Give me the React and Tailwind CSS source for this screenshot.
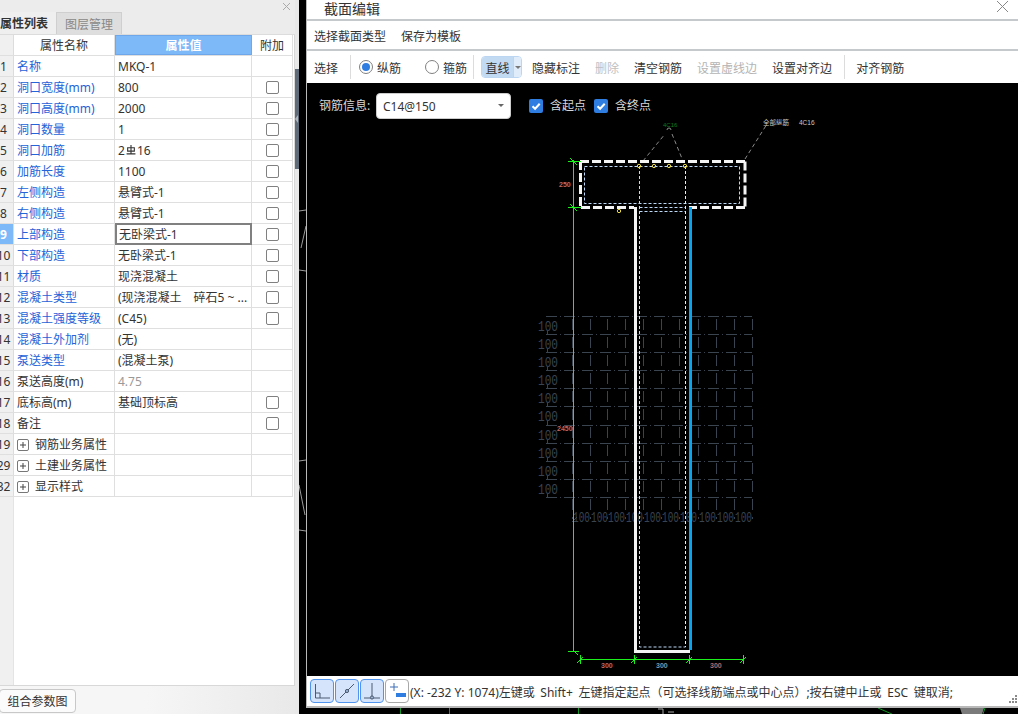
const rows = [
  { no: 1, name: '名称', value: 'MKQ-1', blue: true },
  { no: 2, name: '洞口宽度(mm)', value: '800', blue: true, check: true },
  { no: 3, name: '洞口高度(mm)', value: '2000', blue: true, check: true },
  { no: 4, name: '洞口数量', value: '1', blue: true, check: true },
  { no: 5, name: '洞口加筋', rebar: true, blue: true, check: true },
  { no: 6, name: '加筋长度', value: '1100', blue: true, check: true },
  { no: 7, name: '左侧构造', value: '悬臂式-1', blue: true, check: true },
  { no: 8, name: '右侧构造', value: '悬臂式-1', blue: true, check: true },
  { no: 9, name: '上部构造', value: '无卧梁式-1', blue: true, check: true, selected: true },
  { no: 10, name: '下部构造', value: '无卧梁式-1', blue: true, check: true },
  { no: 11, name: '材质', value: '现浇混凝土', blue: true, check: true },
  { no: 12, name: '混凝土类型', value: '(现浇混凝土　碎石5 ~ ...', blue: true, check: true },
  { no: 13, name: '混凝土强度等级', value: '(C45)', blue: true, check: true },
  { no: 14, name: '混凝土外加剂', value: '(无)', blue: true },
  { no: 15, name: '泵送类型', value: '(混凝土泵)', blue: true },
  { no: 16, name: '泵送高度(m)', value: '4.75', muted: true },
  { no: 17, name: '底标高(m)', value: '基础顶标高', check: true },
  { no: 18, name: '备注', value: '', check: true },
  { no: 19, name: '钢筋业务属性', group: true },
  { no: 29, name: '土建业务属性', group: true },
  { no: 32, name: '显示样式', group: true },
];

const gridY = [317, 335, 353, 371, 389, 407, 426, 444, 462, 480, 498];
const gridX = [572, 590, 607, 625, 643, 661, 679, 698, 716, 734, 752];

function RowNo({ no, active }) {
  return (
    <div className={`w-[14px] shrink-0 overflow-hidden border-r border-[#dcdcdc] pt-[2px] ${active ? 'bg-[#7db8f8] font-bold text-white' : 'bg-[#f0f0f0] text-[#333]'}`}>
      <div className="flex h-full w-[7px] items-center justify-center whitespace-nowrap">{no}</div>
    </div>
  );
}

function RebarValue() {
  return (
    <span className="flex items-center">
      2
      <svg viewBox="0 0 9 9" className="mx-[1px] mb-[3px] h-[10px] w-[10px]" fill="none" stroke="#333" strokeWidth="1" aria-label="钢筋符号">
        <path d="M1.5 2.5h6v3h-6zM4.5 0v8M.5 8h8" />
      </svg>
      16
    </span>
  );
}

function PropertyRow({ row }) {
  const valueBox = row.selected
    ? 'mb-[-1px] mt-[-1px] h-[22px] border-2 border-[#808080] pl-[2px]'
    : 'border-r border-[#dfdfdf] pl-[3px]';
  return (
    <div className="flex h-[21px] w-[293px] border-b border-[#dfdfdf] bg-white">
      <RowNo no={row.no} active={row.selected} />
      <div className={`flex w-[101px] shrink-0 items-center whitespace-nowrap border-r border-[#dfdfdf] pl-[3px] pt-[2px] ${row.blue ? 'text-[#2563d8]' : 'text-[#333]'}`}>
        {row.group && (
          <span className="mr-[6px] flex h-[12px] w-[12px] items-center justify-center rounded-[2px] border border-[#777]">
            <svg viewBox="0 0 8 8" className="h-[8px] w-[8px]" stroke="#444" strokeWidth="1"><path d="M4 1v6M1 4h6" /></svg>
          </span>
        )}
        {row.name}
      </div>
      <div className={`flex w-[137px] shrink-0 items-center whitespace-nowrap pt-[2px] ${row.muted ? 'text-[#999]' : 'text-[#333]'} ${valueBox}`}>
        {row.rebar ? <RebarValue /> : row.value}
      </div>
      <div className="flex w-[41px] shrink-0 items-center justify-center border-r border-[#dfdfdf]">
        {row.check && <span className="h-[13px] w-[13px] rounded-[2px] border border-[#808080] bg-white" />}
      </div>
    </div>
  );
}

function PropertyPanel() {
  return (
    <div className="flex h-full w-[295px] shrink-0 flex-col bg-gradient-to-r from-[#f6f6f6] via-[#f6f6f6] to-[#e9e9e9]">
      <div className="flex h-[12px] justify-end bg-[#ececec] pr-[5px] pt-[3px]">
        <svg viewBox="0 0 7 7" className="h-[7px] w-[7px]" stroke="#aaa" strokeWidth="1"><path d="M0 0l7 7M7 0l-7 7" /></svg>
      </div>
      <div className="flex h-[23px] border-b border-[#dcdcdc] bg-[#ececec]">
        <div className="flex w-[56px] items-center justify-start whitespace-nowrap bg-[#efefef] pt-[2px] font-bold text-[#333]">属性列表</div>
        <div className="flex w-[66px] items-center justify-center border border-b-0 border-[#cfcfcf] bg-[#dedede] pt-[2px] text-[#888]">图层管理</div>
      </div>
      <div className="flex h-[651px] flex-col border-b border-r border-[#d8d8d8] bg-white">
        <div className="flex h-[21px] w-[293px] border-b border-[#dfdfdf] bg-white">
          <div className="w-[14px] shrink-0 border-r border-[#dcdcdc] bg-[#f0f0f0]" />
          <div className="flex w-[101px] shrink-0 items-center justify-center border-r border-[#dfdfdf] pt-[2px] text-[#333]">属性名称</div>
          <div className="flex w-[137px] shrink-0 items-center justify-center border border-[#6fa8ea] bg-[#7db8f8] pt-[2px] font-bold text-white">属性值</div>
          <div className="flex w-[41px] shrink-0 items-center justify-center border-r border-[#dfdfdf] pt-[2px] text-[#333]">附加</div>
        </div>
        {rows.map((row) => (
          <PropertyRow key={row.no} row={row} />
        ))}
        <div className="w-[14px] flex-1 border-r border-[#e4e4e4] bg-[#f0f0f0]" />
      </div>
      <div className="flex flex-1 items-start pt-[3px]">
        <button type="button" className="ml-[-1px] flex h-[24px] w-[77px] items-center justify-center rounded-[4px] border border-[#c8c8c8] bg-[#fbfbfb] pt-[2px] text-[#333]">
          组合参数图
        </button>
      </div>
    </div>
  );
}

function Splitter() {
  return (
    <div className="flex h-full w-[4px] shrink-0 flex-col bg-[#e8e8e8]">
      <div className="h-[69px]" />
      <div className="flex h-[100px] items-center bg-[#5f6b78]">
        <svg viewBox="0 0 4 8" className="h-[8px] w-[4px]"><path d="M3 0v8L0 4z" fill="#aeb6bf" /></svg>
      </div>
    </div>
  );
}

// leftovers of the cad view behind the dialog
function BackdropStrip() {
  return (
    <svg viewBox="299 0 7 714" className="h-full w-[7px] shrink-0 bg-black" fill="none" stroke="#9a9a9a" strokeWidth="1">
      <path d="M299 211l7-1M301 248l5-22M299 270l7 1M299 461l7-1M299 485l6 30M299 530l7 1" />
    </svg>
  );
}

function Radio({ on }) {
  return (
    <span className="flex h-[14px] w-[14px] items-center justify-center rounded-full border border-[#808080] bg-white">
      {on && <span className="h-[8px] w-[8px] rounded-full bg-[#2f7de1]" />}
    </span>
  );
}

function Tick() {
  return (
    <span className="flex h-[14px] w-[14px] items-center justify-center rounded-[2px] bg-[#2f7de1]">
      <svg viewBox="0 0 12 12" className="h-[12px] w-[12px]" fill="none" stroke="#fff" strokeWidth="2"><path d="M2.5 6.2l2.6 2.6 4.6-5" /></svg>
    </span>
  );
}

function Toolbar() {
  return (
    <div className="flex h-[32px] items-center whitespace-nowrap bg-white text-[#333]">
      <span className="ml-[7px] pt-[4px]">选择</span>
      <span className="ml-[12px] h-[24px] w-px bg-[#dcdcdc]" />
      <span className="ml-[8px]"><Radio on /></span>
      <span className="ml-[4px] pt-[4px]">纵筋</span>
      <span className="ml-[24px]"><Radio /></span>
      <span className="ml-[4px] pt-[4px]">箍筋</span>
      <span className="ml-[6px] h-[24px] w-px bg-[#dcdcdc]" />
      <div className="ml-[7px] flex h-[22px] w-[41px] overflow-hidden rounded-[4px] border border-[#bcd6f2]">
        <span className="flex w-[31px] items-center justify-center bg-[#c3daf3] pt-[3px]">直线</span>
        <span className="flex flex-1 items-center justify-center border-l border-[#bcd6f2] bg-[#e0ecf9]">
          <span className="h-0 w-0 border-x-[3px] border-t-[3px] border-x-transparent border-t-[#777]" />
        </span>
      </div>
      <span className="ml-[10px] pt-[4px]">隐藏标注</span>
      <span className="ml-[15px] pt-[4px] text-[#c0c0c0]">删除</span>
      <span className="ml-[15px] pt-[4px]">清空钢筋</span>
      <span className="ml-[15px] pt-[4px] text-[#b4b4b4]">设置虚线边</span>
      <span className="ml-[15px] pt-[4px]">设置对齐边</span>
      <span className="ml-[12px] h-[24px] w-px bg-[#dcdcdc]" />
      <span className="ml-[11px] pt-[4px]">对齐钢筋</span>
    </div>
  );
}

function Drawing() {
  const labelFont = 'Liberation Mono, monospace';
  const smallFont = 'Liberation Sans, sans-serif';
  return (
    <svg viewBox="307 84 711 593" className="absolute inset-0 h-full w-full" fill="none">
      {/* hidden dimension grid */}
      <g stroke="#3a4350" strokeWidth="1">
        {gridY.map((y) => (
          <path key={y} d={`M546 ${y + 0.5}H752`} strokeDasharray="11 3 1 3" />
        ))}
        {gridX.map((x) => (
          <path key={x} d={`M${x + 0.5} 317V520`} strokeDasharray="11 7" strokeDashoffset="-3" />
        ))}
        {gridY.slice(0, 10).map((y) => (
          <path key={y} d={`M547.5 ${y + 15}v4`} />
        ))}
        <path d="M572 523l5-5" />
      </g>
      <g fill="#3a4350" fontFamily={labelFont} fontSize="15">
        {gridY.slice(0, 10).map((y) => (
          <text key={y} x="538" y={y + 15} textLength="20" lengthAdjust="spacingAndGlyphs">100</text>
        ))}
        {gridX.slice(0, 10).map((x) => (
          <text key={x} x={x + 1} y="523" textLength="17" lengthAdjust="spacingAndGlyphs">100</text>
        ))}
      </g>

      {/* leaders */}
      <g stroke="#8a8a8a" strokeWidth="1" strokeDasharray="4 3">
        <path d="M643 162l22-27M672 135l11 27M745 160l22-35" />
      </g>
      <path d="M667 131a2 2 0 0 1 4 0" stroke="#8a8a8a" />
      <text x="663" y="128" fontSize="6" fill="#0d7a1f" fontFamily={smallFont}>4C16</text>
      <text x="763" y="126" fontSize="6.5" fill="#c9c9c9" fontFamily="Noto Sans CJK SC, sans-serif">全部纵筋</text>
      <text x="799" y="126" fontSize="6.5" fill="#c9c9c9" fontFamily={smallFont}>4C16</text>

      {/* concrete outline */}
      <g stroke="#f4f4f4" strokeWidth="3">
        <path d="M580 162.5H745M745 162.5V208.5" strokeDasharray="9 3" />
        <path d="M580.5 162V208" strokeDasharray="9 3" />
        <path d="M581 208.5H634" strokeDasharray="9 3" />
        <path d="M745 208.5H689" strokeDasharray="9 3" />
        <path d="M635.5 208V654M634 652.5H690" />
      </g>
      <path d="M690.5 208V651" stroke="#0aa5ee" strokeWidth="3" />

      {/* rebar */}
      <g stroke="#bcd9f8" strokeWidth="1" strokeDasharray="3 2">
        <path d="M584.5 167.5H739.5V204.5H584.5Z" />
        <path d="M639.5 167V648H685.5M639.5 208.5H685.5M639.5 212.5H685.5" />
      </g>
      <path d="M685.5 167V648" stroke="#e8f0f8" strokeDasharray="3 2" />
      <g stroke="#ecdc4c" strokeWidth="1">
        <circle cx="639" cy="167" r="1.7" />
        <circle cx="654" cy="167" r="1.7" />
        <circle cx="669" cy="167" r="1.7" />
        <circle cx="685" cy="167" r="1.7" />
        <circle cx="619" cy="212" r="1.7" />
      </g>

      {/* dimensions */}
      <g stroke="#1cf01c" strokeWidth="1">
        <path d="M573.5 161V653M568 162.5H581M568 208.5H581M568 652.5H579M570 159l7 7M570 205l7 7M574 652l4 4" />
        <path d="M580 660.5H744M580.5 656V665M634.5 656V665M689.5 656V665M743.5 656V665M577 664l6-6M631 664l6-6M686 664l6-6M740 664l6-6" />
      </g>
      <g fontFamily={smallFont} fontSize="7" fontWeight="700" fill="#b86a6a">
        <text x="601" y="669">300</text>
        <text x="656" y="669" fill="#7d98a6">300</text>
        <text x="710" y="669">300</text>
        <text x="559" y="188">250</text>
        <text x="557" y="432">2450</text>
      </g>
    </svg>
  );
}

function Canvas() {
  return (
    <div className="relative flex-1 overflow-hidden bg-black">
      <Drawing />
      <div className="relative flex h-[44px] items-center whitespace-nowrap pl-[12px] pt-[1px] text-[#d8d8d8]">
        <span className="w-[57px]">钢筋信息:</span>
        <div className="flex h-[26px] w-[135px] items-center justify-between rounded-[4px] border border-[#ccc] bg-white pl-[6px] pr-[6px] text-[#333]">
          <span className="pt-[2px]">C14@150</span>
          <span className="h-0 w-0 border-x-[3px] border-t-[3px] border-x-transparent border-t-[#666]" />
        </div>
        <span className="ml-[18px]"><Tick /></span>
        <span className="ml-[7px]">含起点</span>
        <span className="ml-[8px]"><Tick /></span>
        <span className="ml-[7px]">含终点</span>
      </div>
    </div>
  );
}

function SnapButton({ active, children }) {
  return (
    <button type="button" className={`flex h-[24px] w-[24px] shrink-0 items-center justify-center rounded-[4px] border ${active ? 'border-[#4f94ee] bg-[#d6e4fb]' : 'border-[#a8a8a8] bg-white'}`}>
      {children}
    </button>
  );
}

function StatusBar() {
  return (
    <div className="relative flex h-[30px] items-center whitespace-nowrap rounded-bl-[6px] bg-white pl-[3px] text-[#333]">
      <div className="flex gap-px">
        <SnapButton active>
          <svg viewBox="0 0 20 20" className="h-[20px] w-[20px]" fill="none" stroke="#4a5a70" strokeWidth="1"><path d="M3.5 3v14H18M3.5 12H8v5" /></svg>
        </SnapButton>
        <SnapButton active>
          <svg viewBox="0 0 20 20" className="h-[20px] w-[20px]" fill="none" stroke="#4a5a70" strokeWidth="1"><path d="M3 17L17 3" /><circle cx="10" cy="10" r="1.6" fill="#9db4d4" /></svg>
        </SnapButton>
        <SnapButton active>
          <svg viewBox="0 0 20 20" className="h-[20px] w-[20px]" fill="none" stroke="#4a5a70" strokeWidth="1"><path d="M10 2v14M2 17h16" /><circle cx="10" cy="16.5" r="1.6" fill="#9db4d4" /></svg>
        </SnapButton>
        <SnapButton>
          <svg viewBox="0 0 20 20" className="h-[20px] w-[20px]" fill="none"><path d="M7 2v8M3 6h8" stroke="#3f6fb5" /><path d="M9 12h10v4H9z" fill="#2f7de1" /></svg>
        </SnapButton>
      </div>
      <span className="ml-px pt-[4px]">
        (X: -232 Y: 1074)左键或<span className="[word-spacing:2.5px]"> Shift+ 左键指定起点（可选择线筋端点或中心点）;按右键中止或 ESC 键取消;</span>
      </span>
      <svg viewBox="0 0 9 9" className="absolute bottom-[2px] right-0 h-[9px] w-[9px]" fill="#8a8a8a">
        <path d="M6 0h2v2H6zM3 3h2v2H3zM6 3h2v2H6zM0 6h2v2H0zM3 6h2v2H3zM6 6h2v2H6z" />
      </svg>
    </div>
  );
}

function SectionDialog() {
  return (
    <div className="flex min-w-0 flex-1 flex-col bg-black">
      <div className="flex h-[708px] flex-col border-b-2 border-l border-[#b9b9b9] bg-white">
        <div className="flex h-[19px] items-center justify-between bg-white pl-[17px] pr-[10px] text-[#333]">
          <span className="mb-[2px] text-[14px]">截面编辑</span>
          <svg viewBox="0 0 11 11" className="mb-[6px] h-[11px] w-[11px]" stroke="#888" strokeWidth="1"><path d="M0 0l11 11M11 0L0 11" /></svg>
        </div>
        <div className="flex h-[32px] items-center gap-[15px] border-y-2 border-[#c6c9cc] pl-[7px] pt-[4px] text-[#333]">
          <span>选择截面类型</span>
          <span>保存为模板</span>
        </div>
        <Toolbar />
        <Canvas />
        <StatusBar />
      </div>
      <svg viewBox="306 708 712 6" className="h-[6px] w-full shrink-0" fill="none" stroke="#0e9a24" strokeWidth="1">
        <path d="M400.5 708v6M449.5 708v6M578.5 708v6M878 708l14 6M985 708l-2 6" />
        <path d="M658 709h5v5M668 712h6" stroke="#a8a8a8" />
        <path d="M960 708h24l-2 6h-20z" fill="#7a7a7a" stroke="none" />
      </svg>
    </div>
  );
}

export default function App() {
  return (
    <div className="flex h-[714px] w-[1018px] overflow-hidden bg-black font-['Noto_Sans','Noto_Sans_CJK_SC',sans-serif] text-[12px]">
      <PropertyPanel />
      <Splitter />
      <BackdropStrip />
      <SectionDialog />
    </div>
  );
}
